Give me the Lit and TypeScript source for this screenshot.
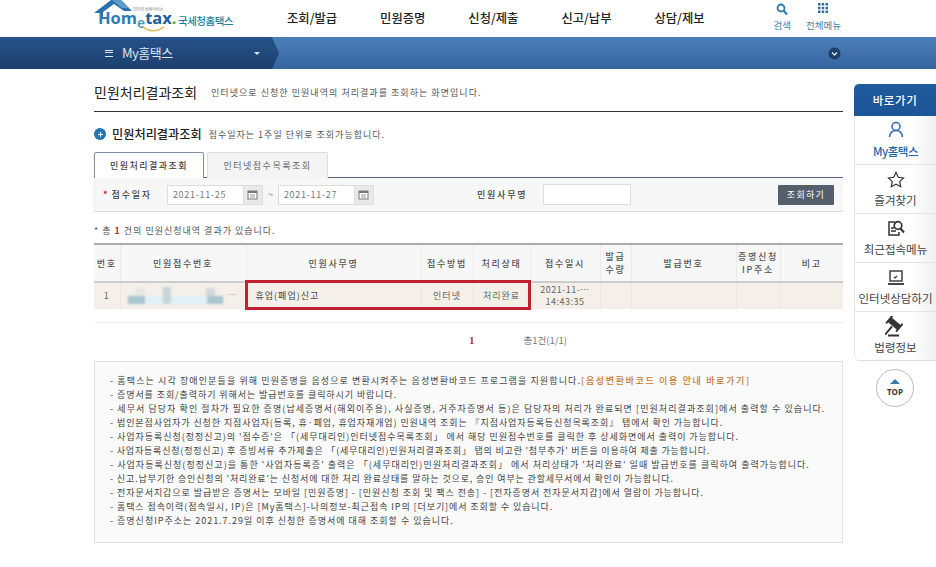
import { LitElement, html, css, svg } from "lit";
import { customElement } from "lit/decorators.js";

const NOTES = [
  { ls: 1.11, t: html`- 홈택스는 시각 장애인분들을 위해 민원증명을 음성으로 변환시켜주는 음성변환바코드 프로그램을 지원합니다.<b class="link">[음성변환바코드 이용 안내 바로가기]</b>` },
  { ls: 0.92, t: html`- 증명서를 조회/출력하기 위해서는 발급번호를 클릭하시기 바랍니다.` },
  { ls: 1.07, t: html`- 세무서 담당자 확인 절차가 필요한 증명(납세증명서(해외이주용), 사실증명, 거주자증명서 등)은 담당자의 처리가 완료되면 [민원처리결과조회]에서 출력할 수 있습니다.` },
  { ls: 0.91, t: html`- 법인본점사업자가 신청한 지점사업자(등록, 휴·폐업, 휴업자재개업) 민원내역 조회는 『지점사업자등록등신청목록조회』 탭에서 확인 가능합니다.` },
  { ls: 0.97, t: html`- 사업자등록신청(정정신고)의 '접수증'은 「(세무대리인)인터넷접수목록조회」 에서 해당 민원접수번호를 클릭한 후 상세화면에서 출력이 가능합니다.` },
  { ls: 0.8, t: html`- 사업자등록신청(정정신고) 후 증빙서류 추가제출은 「(세무대리인)민원처리결과조회」 탭의 비고란 '첨부추가' 버튼을 이용하여 제출 가능합니다.` },
  { ls: 1.03, t: html`- 사업자등록신청(정정신고)을 통한 '사업자등록증' 출력은 「(세무대리인)민원처리결과조회」 에서 처리상태가 '처리완료' 일때 발급번호를 클릭하여 출력가능합니다.` },
  { ls: 0.86, t: html`- 신고.납부기한 승인신청의 '처리완료'는 신청서에 대한 처리 완료상태를 말하는 것으로, 승인 여부는 관할세무서에서 확인이 가능합니다.` },
  { ls: 0.94, t: html`- 전자문서지갑으로 발급받은 증명서는 모바일 [민원증명] - [민원신청 조회 및 팩스 전송] - [전자증명서 전자문서지갑]에서 열람이 가능합니다.` },
  { ls: 0.91, t: html`- 홈택스 접속이력(접속일시, IP)은 [My홈택스]-나의정보-최근접속 IP의 [더보기]에서 조회할 수 있습니다.` },
  { ls: 0.98, t: html`- 증명신청IP주소는 2021.7.29일 이후 신청한 증명서에 대해 조회할 수 있습니다.` },
];

const NAV = ["조회/발급", "민원증명", "신청/제출", "신고/납부", "상담/제보"];

const calIcon = html`<svg class="cal" width="11" height="11" viewBox="0 0 11 11"><rect x="1" y="2" width="9" height="8" fill="#fff" stroke="#777"/><rect x="1" y="2" width="9" height="2" fill="#777"/><path d="M3 6h5M3 8h5" stroke="#999"/></svg>`;

const SIDE = [
  { label: "My홈택스", active: true, icon: svg`<circle cx="11" cy="6.500" r="4" fill="none" stroke="#2a6cb0" stroke-width="1.500"/><path d="M4.500 17c.5-4 3-6.500 6.500-6.500s6 2.500 6.500 6.500" fill="none" stroke="#2a6cb0" stroke-width="1.500"/>` },
  { label: "즐겨찾기", icon: svg`<path d="M11 3.500l2.300 4.800 5.200.7-3.800 3.600 1 5.100-4.700-2.500-4.700 2.500 1-5.100-3.800-3.600 5.200-.7z" fill="none" stroke="#333" stroke-width="1.200"/>` },
  { label: "최근접속메뉴", icon: svg`<path d="M10 4H4v13h10v-3" fill="none" stroke="#333" stroke-width="1.500"/><circle cx="13" cy="7.500" r="3.800" fill="none" stroke="#333" stroke-width="1.700"/><path d="M15.500 10.500l3.500 4" stroke="#333" stroke-width="2"/><path d="M6 10h3M6 13h5" stroke="#333" stroke-width="1.300"/>` },
  { label: "인터넷상담하기", icon: svg`<rect x="5" y="4" width="12" height="10" fill="none" stroke="#333" stroke-width="1.400"/><path d="M3 17h16" stroke="#333" stroke-width="1.800"/><path d="M9 10l1 1 2-2" fill="none" stroke="#333" stroke-width="1.200"/>` },
  { label: "법령정보", icon: svg`<g transform="rotate(40 9 8)"><rect x="3" y="4.500" width="12" height="6" fill="#333"/><rect x="1.500" y="2.500" width="2" height="10" fill="#333"/><rect x="14.500" y="2.500" width="2" height="10" fill="#333"/><rect x="8" y="11" width="2" height="11" fill="#333"/></g><path d="M3 20.500h11v-2H3z" fill="#333"/>` },
];

@customElement("app-root")
export class AppRoot extends LitElement {
  static styles = css`
    :host {
      display: block;
      position: relative;
      width: 936px;
      height: 567px;
      overflow: hidden;
      background: #fff;
      font-family: "Noto Sans CJK KR", "Noto Sans", sans-serif;
      color: #444;
      font-size: 9px;
    }
    /* header */
    .top { height: 37px; display: flex; padding-left: 94px; }
    .logo { position: relative; width: 140px; height: 37px; font-family: "Open Sans", "Noto Sans", sans-serif; flex: none; }
    .roof { position: absolute; left: 0; top: 0; }
    .tiny { position: absolute; left: 39px; top: 6.500px; font-size: 4px; color: #777; line-height: 4.500px; font-family: "Noto Sans CJK KR", sans-serif; white-space: nowrap; }
    .word { position: absolute; left: 4px; top: 11px; display: flex; align-items: baseline; font-size: 16.500px; line-height: 14px; font-weight: 700; color: #2e7cb5; white-space: nowrap; }
    .word .e { color: #3b97b8; font-size: 14px; position: relative; top: 4px; font-weight: 600; }
    .word .tax { color: #1d5f9b; }
    .word .dot { color: #67a83b; }
    .kr { position: absolute; left: 84px; top: 13px; font-size: 10.500px; line-height: 16px; color: #19809a; font-weight: 500; letter-spacing: -0.5px; font-family: "Noto Sans CJK KR", sans-serif; white-space: nowrap; }
    .smile { position: absolute; left: 47px; top: 25px; }
    nav { display: flex; margin-left: 53px; padding-top: 8px; gap: 43px; flex: none; }
    nav span { font-size: 12.300px; line-height: 21px; font-weight: 500; color: #222; white-space: nowrap; }
    .tools { display: flex; margin-left: 69px; gap: 15px; flex: none; }
    .tool { display: flex; flex-direction: column; align-items: center; font-size: 9.500px; line-height: 12px; color: #3f83a8; padding-top: 2px; white-space: nowrap; }
    .tool svg { display: block; height: 15px; margin-bottom: 2px; }
    /* bar */
    .bar { height: 32px; display: flex; align-items: stretch; background: linear-gradient(#4c7fba, #35659f); }
    .bar-shape { width: 279px; background: linear-gradient(#265288, #1c406e); clip-path: polygon(0 0, 272px 0, 279px 50%, 272px 100%, 0 100%); display: flex; align-items: center; padding-left: 105px; box-sizing: border-box; color: #dfe7f1; }
    .burger { width: 8px; height: 7px; margin-right: 9px; border-top: 1.500px solid #dfe7f1; border-bottom: 1.500px solid #dfe7f1; box-sizing: border-box; background: linear-gradient(transparent 1px, #dfe7f1 1px, #dfe7f1 2.500px, transparent 2.500px); }
    .my { font-size: 13px; letter-spacing: -0.5px; line-height: 20px; width: 132px; }
    .caret { width: 0; height: 0; border-left: 3px solid transparent; border-right: 3px solid transparent; border-top: 3px solid #dfe7f1; }
    .bar-right { margin-left: auto; margin-right: 95px; display: flex; align-items: center; }
    /* content */
    main { margin-left: 94px; width: 749px; }
    .page-head { height: 43px; display: flex; align-items: flex-start; gap: 14px; border-bottom: 1px solid #333; box-sizing: border-box; padding-top: 12px; }
    .page-head h1 { margin: 0; font-size: 14px; line-height: 22px; font-weight: 400; color: #222; }
    .page-head p { margin: 5px 0 0; font-size: 9px; line-height: 14px; color: #555; letter-spacing: 1.040px; }
    .sec { display: flex; align-items: center; height: 18px; margin-top: 13px; }
    .sec i { width: 12px; height: 12px; border-radius: 50%; background: #1f77b4; position: relative; margin-right: 6px; }
    .sec i::after { content: ""; position: absolute; left: 3.500px; top: 3.500px; width: 5px; height: 5px; background: linear-gradient(transparent 2px, #fff 2px, #fff 3px, transparent 3px), linear-gradient(90deg, transparent 2px, #fff 2px, #fff 3px, transparent 3px); }
    .sec h2 { margin: 0 7px 0 0; font-size: 12.200px; line-height: 16px; font-weight: 500; color: #222; }
    .sec span { font-size: 9px; color: #555; letter-spacing: 1px; }
    .tabs { display: flex; gap: 3px; margin-top: 9px; height: 26px; margin-bottom: -1px; position: relative; z-index: 1; }
    .tab { box-sizing: border-box; height: 26px; display: flex; align-items: center; justify-content: center; border: 1px solid #ddd; border-bottom: 0; background: #f4f4f4; border-radius: 2px 2px 0 0; font-size: 9px; letter-spacing: 1.500px; color: #666; width: 121px; }
    .tab.on { width: 110px; background: #fff; color: #444; font-weight: 500; border: 1px solid #7f8ea3; border-bottom: 0; }
    .search { box-sizing: border-box; height: 35px; display: flex; align-items: center; background: #f7f7f7; border-top: 1px solid #5a6a80; border-bottom: 1px solid #ddd; border-left: 1px solid #eee; padding-left: 8px; padding-right: 9px; }
    .star { color: #c0202e; font-size: 9px; font-weight: 700; margin-right: 4px; }
    .lab { font-size: 9px; font-weight: 500; letter-spacing: 1.800px; color: #444; white-space: nowrap; }
    .lab.first { margin-right: 15px; }
    .lab.second { margin-left: 103px; }
    .date { width: 96px; height: 20px; box-sizing: border-box; border: 1px solid #ddd; background: #fff; display: flex; align-items: center; padding-left: 5px; font-size: 9px; letter-spacing: 0.7px; color: #777; }
    .date b { margin-left: auto; width: 18px; height: 18px; background: #e9e9e9; display: flex; align-items: center; justify-content: center; border-left: 1px solid #ddd; }
    .tilde { width: 15px; text-align: center; color: #666; }
    .txt { width: 88px; height: 21px; box-sizing: border-box; border: 1px solid #ddd; background: #fff; margin-left: 16px; }
    .btn { margin-left: auto; width: 56px; height: 20px; background: #555e6b; color: #fff; font-size: 9px; letter-spacing: 1.300px; display: flex; align-items: center; justify-content: center; border-radius: 1px; }
    .count { margin: 12px 0 5px; font-size: 9px; line-height: 14px; color: #555; letter-spacing: 1px; }
    .count b { color: #b5302e; }
    .tw { position: relative; }
    table { width: 749px; border-collapse: collapse; table-layout: fixed; font-size: 9px; }
    thead th { height: 38px; background: #f7f7f7; border-top: 2px solid #aaa; border-bottom: 2px solid #ccc; border-left: 1px solid #eaeaea; font-weight: 500; letter-spacing: 1.700px; color: #555; padding: 0; line-height: 13px; box-sizing: border-box; }
    th:first-child, td:first-child { border-left: 0; }
    tbody td { height: 27px; background: #f4efe9; border-left: 1px solid #ebe6df; text-align: center; color: #666; padding: 0; line-height: 12px; letter-spacing: 1px; box-sizing: border-box; }
    td.name { text-align: left; padding-left: 9px; color: #444; }
    td.when { letter-spacing: 0.500px; }
    td.blur { position: relative; text-align: left; padding-left: 7px; }
    td.blur svg { display: block; filter: blur(1px); }
    .dots { position: absolute; right: 9px; top: 6px; color: #999; letter-spacing: 0; }
    .red { position: absolute; left: 151px; top: 37px; width: 286px; height: 30px; box-sizing: border-box; border: 3px solid #c1202f; pointer-events: none; }
    .pager { margin-top: 13px; border-top: 1px solid #eee; height: 33px; padding-bottom: 5px; display: flex; align-items: center; }
    .pager b { margin-left: 375px; color: #a8403c; font-size: 11px; font-family: "Liberation Serif", serif; }
    .pager span { margin-left: 49px; color: #777; font-size: 9.500px; }
    .notes { box-sizing: border-box; height: 182px; background: #fafafa; border: 1px solid #e2e2e2; padding: 12px 0 0 15px; font-size: 9px; line-height: 14px; color: #444; white-space: nowrap; }
    .notes div { height: 14px; }
    .link { color: #c8772f; font-weight: 500; letter-spacing: 1.650px; }
    /* side panel */
    aside { position: absolute; left: 854px; top: 84px; width: 82px; }
    .shead { height: 32px; background: linear-gradient(#1f5b9e, #1c5597); border-radius: 5px 0 0 0; color: #fff; font-size: 11.500px; font-weight: 500; display: flex; align-items: center; justify-content: center; letter-spacing: 0.6px; }
    .slist { border-left: 1px solid #e8e8e8; border-bottom: 1px solid #e0e0e0; border-radius: 0 0 0 5px; background: linear-gradient(90deg, #fff 70%, #efefef); }
    .sitem { box-sizing: border-box; height: 49px; display: flex; flex-direction: column; align-items: center; justify-content: flex-end; padding-bottom: 6px; border-bottom: 1px solid #e4e4e4; font-size: 11.500px; line-height: 14px; color: #444; white-space: nowrap; }
    .sitem:last-child { border-bottom: 0; height: 48px; }
    .sitem svg { display: block; margin-bottom: 2px; }
    .sitem.on { color: #1f65a8; font-weight: 500; letter-spacing: -0.5px; }
    .topbtn { width: 38px; height: 38px; box-sizing: border-box; border: 1px solid #bbb; border-radius: 50%; margin: 8px 0 0 22px; display: flex; flex-direction: column; align-items: center; justify-content: center; background: #fff; font-family: "Open Sans", sans-serif; font-size: 8px; font-weight: 700; line-height: 10px; color: #333; }
    .topbtn i { width: 0; height: 0; border-left: 5px solid transparent; border-right: 5px solid transparent; border-bottom: 5px solid #3a78ad; margin-bottom: 3px; }
  `;

  render() {
    return html`
      <div class="top">
        <div class="logo">
          <svg class="roof" width="40" height="20" viewBox="0 0 40 20"><path d="M0 13 L17 0 H27 L38 11 H30 L20 4 L9 12 V18 H6 V13z" fill="#2a72ad"/><path d="M18 0h9l8 8H28z" fill="#5d9ccb"/></svg>
          <span class="tiny">인터넷 납세서비스</span>
          <div class="word"><span>Hom</span><span class="e">e</span><span class="tax">tax</span><span class="dot">.</span></div>
          <svg class="smile" width="24" height="9" viewBox="0 0 24 9"><path d="M1 1 Q11 10 23 2" fill="none" stroke="#e8b04a" stroke-width="1.200"/></svg>
          <span class="kr">국세청홈택스</span>
        </div>
        <nav>${NAV.map((n) => html`<span>${n}</span>`)}</nav>
        <div class="tools">
          <div class="tool"><svg width="12" height="15" viewBox="0 0 12 15"><circle cx="5" cy="6" r="3.500" fill="none" stroke="#2c7aa8" stroke-width="1.800"/><path d="M7.500 8.500L11 12.500" stroke="#2c7aa8" stroke-width="2"/></svg>검색</div>
          <div class="tool"><svg width="12" height="15" viewBox="0 0 12 15" fill="#2c6f9c"><rect x="1" y="1" width="2.500" height="2.500"/><rect x="4.700" y="1" width="2.500" height="2.500"/><rect x="8.500" y="1" width="2.500" height="2.500"/><rect x="1" y="4.800" width="2.500" height="2.500"/><rect x="4.700" y="4.800" width="2.500" height="2.500"/><rect x="8.500" y="4.800" width="2.500" height="2.500"/><rect x="1" y="8.500" width="2.500" height="2.500"/><rect x="4.700" y="8.500" width="2.500" height="2.500"/><rect x="8.500" y="8.500" width="2.500" height="2.500"/></svg>전체메뉴</div>
        </div>
      </div>
      <div class="bar">
        <div class="bar-shape">
          <span class="burger"></span><span class="my">My홈택스</span><span class="caret"></span>
        </div>
        <div class="bar-right"><svg width="13" height="13" viewBox="0 0 13 13"><circle cx="6.500" cy="6.500" r="6" fill="#1e3f6a"/><path d="M4 5.500l2.500 2.500L9 5.500" fill="none" stroke="#dfe7f1" stroke-width="1.300"/></svg></div>
      </div>
      <main>
        <div class="page-head">
          <h1>민원처리결과조회</h1>
          <p>인터넷으로 신청한 민원내역의 처리결과를 조회하는 화면입니다.</p>
        </div>
        <div class="sec"><i></i><h2>민원처리결과조회</h2><span>접수일자는 1주일 단위로 조회가능합니다.</span></div>
        <div class="tabs"><div class="tab on">민원처리결과조회</div><div class="tab">인터넷접수목록조회</div></div>
        <div class="search">
          <span class="star">*</span><span class="lab first">접수일자</span>
          <div class="date">2021-11-25<b>${calIcon}</b></div>
          <span class="tilde">~</span>
          <div class="date">2021-11-27<b>${calIcon}</b></div>
          <span class="lab second">민원사무명</span>
          <div class="txt"></div>
          <div class="btn">조회하기</div>
        </div>
        <div class="count">* 총 <b>1</b> 건의 민원신청내역 결과가 있습니다.</div>
        <div class="tw">
          <table>
            <colgroup><col style="width:26px"/><col style="width:126px"/><col style="width:175px"/><col style="width:52px"/><col style="width:57px"/><col style="width:70px"/><col style="width:31px"/><col style="width:105px"/><col style="width:44px"/><col style="width:63px"/></colgroup>
            <thead><tr><th>번호</th><th>민원접수번호</th><th>민원사무명</th><th>접수방법</th><th>처리상태</th><th>접수일시</th><th>발급<br/>수량</th><th>발급번호</th><th>증명신청<br/>IP주소</th><th>비고</th></tr></thead>
            <tbody><tr>
              <td>1</td>
              <td class="blur"><svg width="96" height="18" viewBox="0 0 96 18"><rect x="0" y="9" width="17" height="8" fill="#a9c6d2"/><rect x="8" y="1" width="9" height="8" fill="#e6e6e6"/><rect x="18" y="9" width="65" height="8" fill="#dff0f7"/><rect x="35" y="0" width="8" height="17" fill="#c9d4d8"/><rect x="78" y="1" width="9" height="16" fill="#d5d9db"/><rect x="80" y="9" width="15" height="8" fill="#a9c6d2"/></svg><span class="dots">…</span></td>
              <td class="name">휴업(폐업)신고</td>
              <td>인터넷</td><td>처리완료</td>
              <td class="when">2021-11-…<br/>14:43:35</td>
              <td></td><td></td><td></td><td></td>
            </tr></tbody>
          </table>
          <div class="red"></div>
        </div>
        <div class="pager"><b>1</b><span>총1건(1/1)</span></div>
        <div class="notes">${NOTES.map((n) => html`<div style="letter-spacing:${n.ls}px">${n.t}</div>`)}</div>
      </main>
      <aside>
        <div class="shead">바로가기</div>
        <div class="slist">
          ${SIDE.map((s) => html`<div class="sitem ${s.active ? "on" : ""}"><svg width="22" height="22" viewBox="0 0 22 22">${s.icon}</svg>${s.label}</div>`)}
        </div>
        <div class="topbtn"><i></i>TOP</div>
      </aside>
    `;
  }
}
